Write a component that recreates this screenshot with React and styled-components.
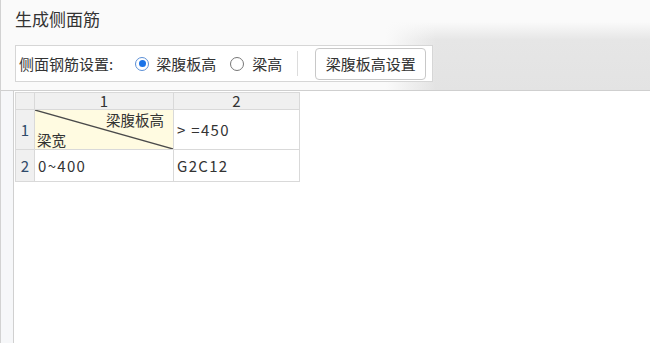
import styled, { createGlobalStyle } from 'styled-components';

const GlobalStyle = createGlobalStyle`
  html, body {
    margin: 0;
    padding: 0;
    background: #ffffff;
  }
  body {
    font-family: "Noto Sans CJK SC", "Noto Sans", sans-serif;
    color: #333;
  }
`;

const rows = [
  { id: 1, cells: [null, '> =450'], height: 40 },
  { id: 2, cells: ['0~400', 'G2C12'], height: 32 },
];

const App = () => {
  return (
    <>
      <GlobalStyle />
      <Window>
        <Header>
          <Title>生成侧面筋</Title>
          <ToolBox>
            <Label>侧面钢筋设置:</Label>
            <RadioItem>
              <RadioDot checked />
              梁腹板高
            </RadioItem>
            <RadioItem>
              <RadioDot />
              梁高
            </RadioItem>
            <Separator />
            <SettingButton>梁腹板高设置</SettingButton>
          </ToolBox>
        </Header>
        <Body>
          <Gutter />
          <Main>
            <Grid>
              <colgroup>
                <col style={{ width: 19 }} />
                <col style={{ width: 139 }} />
                <col style={{ width: 126 }} />
              </colgroup>
              <thead>
                <tr>
                  <Corner />
                  <ColHead>1</ColHead>
                  <ColHead>2</ColHead>
                </tr>
              </thead>
              <tbody>
                {rows.map((row) => (
                  <tr key={row.id} style={{ height: row.height }}>
                    <RowHead>{row.id}</RowHead>
                    {row.cells.map((cell, i) =>
                      cell === null ? (
                        <DiagonalCell key={i}>
                          <svg width="100%" height="100%" viewBox="0 0 139 40" preserveAspectRatio="none">
                            <line x1="0" y1="0" x2="139" y2="40" stroke="#4a4a4a" strokeWidth="1.3" />
                          </svg>
                          <DiagTop>梁腹板高</DiagTop>
                          <DiagBottom>梁宽</DiagBottom>
                        </DiagonalCell>
                      ) : (
                        <Cell key={i}>{cell}</Cell>
                      )
                    )}
                  </tr>
                ))}
              </tbody>
            </Grid>
          </Main>
        </Body>
      </Window>
    </>
  );
};

const Window = styled.div`
  width: 650px;
  height: 343px;
  box-sizing: border-box;
  border-left: 1px solid #d2d2d2;
  display: flex;
  flex-direction: column;
  overflow: hidden;
`;

// blurred backdrop on the right of the toolbar
const Header = styled.div`
  height: 91px;
  box-sizing: border-box;
  border-bottom: 1px solid #cfcfcf;
  padding-left: 14px;
  background:
    linear-gradient(to right, #fafafa, rgba(250, 250, 250, 0)) 385px 0 / 50px 100% no-repeat,
    linear-gradient(to bottom, rgba(229, 229, 229, 0) 0, #e6e6e6 18px, #e3e3e3 100%) 385px 22px / 265px 69px no-repeat,
    #fafafa;
`;

const Title = styled.div`
  height: 45px;
  padding-top: 6px;
  box-sizing: border-box;
  font-size: 17px;
  color: #333;
`;

const ToolBox = styled.div`
  width: 418px;
  height: 37px;
  box-sizing: border-box;
  border: 1px solid #d6d6d6;
  background: #fff;
  display: flex;
  align-items: center;
  padding-left: 3px;
  font-size: 15px;
  color: #333;
`;

const Label = styled.span`
  margin-right: 22px;
`;

const RadioItem = styled.label`
  display: flex;
  align-items: center;
  gap: 7px;
  margin-right: 14px;
  & + & {
    gap: 8px;
    margin-right: 15px;
  }
`;

const RadioDot = styled.span`
  width: 14px;
  height: 14px;
  box-sizing: border-box;
  border-radius: 50%;
  border: 1px solid ${(p) => (p.checked ? '#5b8fd6' : '#777')};
  background: #fff;
  display: flex;
  align-items: center;
  justify-content: center;
  &::after {
    content: '';
    width: 7px;
    height: 7px;
    border-radius: 50%;
    background: ${(p) => (p.checked ? '#1a73e8' : 'transparent')};
  }
`;

const Separator = styled.span`
  width: 1px;
  height: 25px;
  background: #dcdcdc;
  margin: 0 17px 0 0;
`;

const SettingButton = styled.button`
  height: 32px;
  width: 111px;
  box-sizing: border-box;
  border: 1px solid #c8c8c8;
  border-radius: 4px;
  background: #fff;
  font-family: inherit;
  font-size: 15px;
  color: #333;
  padding: 0;
`;

const Body = styled.div`
  flex: 1;
  display: flex;
`;

const Gutter = styled.div`
  width: 12px;
  background: #f6f7f9;
  border-right: 1px solid #d0d0d0;
`;

const Main = styled.div`
  flex: 1;
  background: #fff;
  padding: 1px 0 0 1px;
`;

const Grid = styled.table`
  border-collapse: collapse;
  table-layout: fixed;
  width: 285px;
  font-size: 15px;
  color: #333;
  td, th {
    border: 1px solid #d9d9d9;
    padding: 0;
  }
`;

const Corner = styled.th`
  background: #f0f0f0;
  height: 16px;
`;

const ColHead = styled.th`
  background: #f0f0f0;
  font-weight: normal;
  font-size: 15px;
  line-height: 16px;
  text-align: center;
  color: #333;
`;

const RowHead = styled.td`
  background: #f0f0f0;
  text-align: center;
  color: #2f4a6a;
`;

const Cell = styled.td`
  padding-left: 3px !important;
  white-space: nowrap;
  letter-spacing: 1.3px;
`;

const DiagonalCell = styled.td`
  position: relative;
  background: #fffbe1;
  svg {
    position: absolute;
    inset: 0;
    display: block;
  }
`;

const DiagTop = styled.span`
  position: absolute;
  top: 1px;
  right: 9px;
  line-height: 18px;
  font-size: 14.5px;
`;

const DiagBottom = styled.span`
  position: absolute;
  bottom: 0;
  left: 2px;
  line-height: 18px;
  font-size: 14.5px;
`;

export default App;
